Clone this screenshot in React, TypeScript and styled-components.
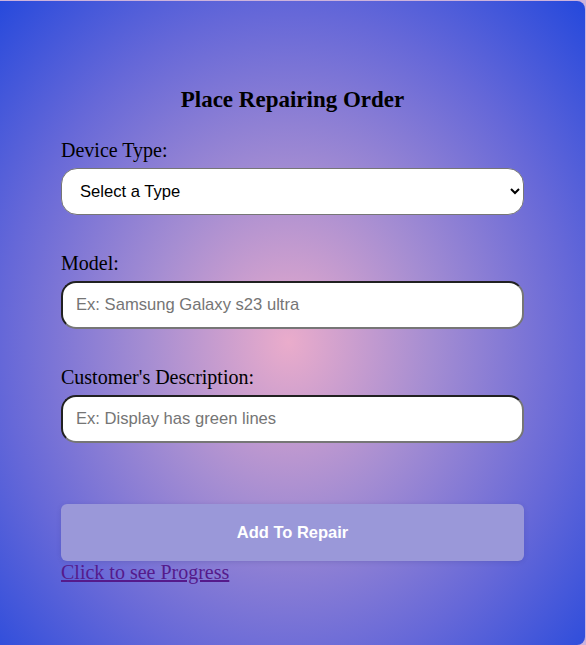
import styled, { createGlobalStyle } from 'styled-components';

const GlobalStyle = createGlobalStyle`
  html, body {
    margin: 0;
    padding: 0;
    background: #cdb3dc;
    overflow: hidden;
  }
`;

const StyledCard = styled.div`
  box-sizing: border-box;
  width: 593px;
  height: 644px;
  margin: 1px 0 0 -8px;
  border-radius: 8px;
  background: radial-gradient(ellipse at 50% 53%, #eaaccb 0%, #a58dd2 34%, #6668d8 68%, #2448dc 100%);
  padding: 85px 61px 0 69px;
  font-family: 'Liberation Serif', 'Times New Roman', serif;
`;

const StyledTitle = styled.h3`
  margin: 0 0 25px;
  text-align: center;
  font-size: 23px;
  line-height: 28px;
  font-weight: bold;
  color: #000;
`;

const StyledField = styled.div`
  display: flex;
  flex-direction: column;
  margin-bottom: 37px;
`;

const StyledLabel = styled.label`
  font-size: 20px;
  line-height: 23px;
  color: #000;
  margin-bottom: 6px;
`;

const StyledSelect = styled.select`
  box-sizing: border-box;
  height: 47px;
  width: 100%;
  border: 1px solid #767676;
  border-radius: 16px;
  background: #fff;
  padding: 0 12px 0 14px;
  font-family: 'Liberation Sans', Arial, sans-serif;
  font-size: 16.6px;
  color: #000;
`;

const StyledInput = styled.input`
  box-sizing: border-box;
  height: 48px;
  width: 100%;
  border: 2px inset #767676;
  border-radius: 15px;
  background: #fff;
  padding: 0 13px;
  font-family: 'Liberation Sans', Arial, sans-serif;
  font-size: 16.6px;
  &::placeholder {
    color: #757575;
  }
`;

const StyledButton = styled.button`
  box-sizing: border-box;
  width: 100%;
  height: 57px;
  margin-top: 24px;
  border: none;
  border-radius: 6px;
  background: #9a98d9;
  box-shadow: 0 1px 4px rgba(60, 60, 140, 0.25);
  color: #fff;
  font-family: 'Liberation Sans', Arial, sans-serif;
  font-size: 16.5px;
  font-weight: bold;
  cursor: pointer;
`;

const StyledLink = styled.a`
  display: inline-block;
  font-size: 20px;
  line-height: 23px;
  color: #551a8b;
  text-decoration: underline;
`;

export default function App() {
  return (
    <>
      <GlobalStyle />
      <StyledCard>
        <StyledTitle>Place Repairing Order</StyledTitle>
        <StyledField>
          <StyledLabel htmlFor="type">Device Type:</StyledLabel>
          <StyledSelect id="type" defaultValue="">
            <option value="">Select a Type</option>
            <option value="phone">Phone</option>
            <option value="laptop">Laptop</option>
          </StyledSelect>
        </StyledField>
        <StyledField>
          <StyledLabel htmlFor="model">Model:</StyledLabel>
          <StyledInput id="model" placeholder="Ex: Samsung Galaxy s23 ultra" />
        </StyledField>
        <StyledField>
          <StyledLabel htmlFor="desc">Customer's Description:</StyledLabel>
          <StyledInput id="desc" placeholder="Ex: Display has green lines" />
        </StyledField>
        <StyledButton type="button">Add To Repair</StyledButton>
        <StyledLink href="#progress">Click to see Progress</StyledLink>
      </StyledCard>
    </>
  );
}
